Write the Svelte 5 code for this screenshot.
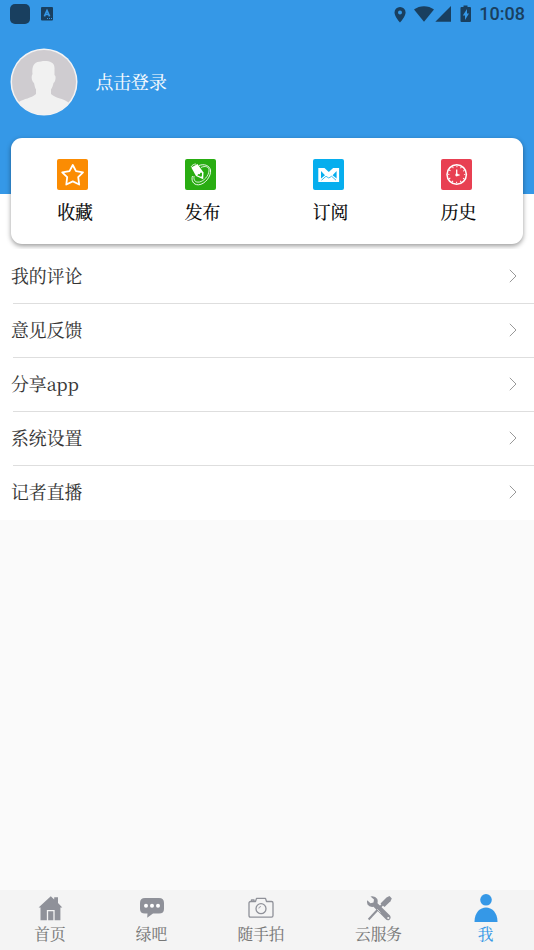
<script>
  const shortcuts = [
    { id: 'fav', label: '收藏', color: '#fb8c03' },
    { id: 'post', label: '发布', color: '#29ad12' },
    { id: 'sub', label: '订阅', color: '#06aeee' },
    { id: 'history', label: '历史', color: '#e84052' }
  ];
  const rows = ['我的评论', '意见反馈', '分享app', '系统设置', '记者直播'];
  const tabs = [
    { id: 'home', label: '首页', grow: 100 },
    { id: 'chat', label: '绿吧', grow: 103 },
    { id: 'camera', label: '随手拍', grow: 116 },
    { id: 'tools', label: '云服务', grow: 119 },
    { id: 'me', label: '我', grow: 95 }
  ];
</script>

<div class="screen">
  <header>
    <div class="status">
      <span class="app-dot"></span>
      <svg class="lang" width="12" height="14" viewBox="0 0 12 14">
        <rect width="12" height="13.400" rx="1" fill="#193f5f" />
        <path d="M3.400 9.300L6 3.500L8.600 9.300M4.200 7.500H7.800" fill="none" stroke="#3598e7" stroke-width="1.700" />
        <path d="M6 11.500h1M8 11.500h1M10 11.500h1" stroke="#3598e7" />
      </svg>
      <svg class="signals" width="82" height="20" viewBox="390 3 82 20" fill="#193f5f">
        <path fill-rule="evenodd" d="M400 6a5.500 5.500 0 0 0-5.500 5.400C394.500 15.500 400 21.500 400 21.500s5.600-6 5.600-10.100A5.500 5.500 0 0 0 400 6Zm0 3.500a2 2 0 1 1 0 4a2 2 0 0 1 0-4Z" />
        <path d="M414 8.500C419.500 4 428.500 4 434 8.500L424 20.800Z" />
        <path d="M451 5V20.800H435.300Z" />
        <path fill-rule="evenodd" d="M463.500 4.500h4V6h2.500q1 0 1 1V20q0 1-1 1h-8.500q-1 0-1-1V7q0-1 1-1h2ZM467 8l-4.200 6.500h2.200v4.500l4-6.500h-2Z" />
      </svg>
      <time>10:08</time>
    </div>
    <div class="profile">
      <svg class="avatar" width="68" height="68" viewBox="0 0 68 68">
        <defs><clipPath id="face"><circle cx="34" cy="34" r="32.500" /></clipPath></defs>
        <circle cx="34" cy="34" r="33.500" fill="#f3f3f4" />
        <circle cx="34" cy="34" r="32" fill="#cfccd0" />
        <path clip-path="url(#face)" fill="#f1f1f1" d="M22.500 26C21.500 17 25 13.500 31 13.500C36 12.500 44.500 13 44.500 20V27C46.500 28 45.500 34 43.500 35C43 38 42 40 41 41.500V46C46 50.500 54 50.500 59 55V68H9V54C14 50.500 21 50.500 26 46V41.500C25 40 24.500 37 24 35C21.500 33 21 28 22.500 26Z" />
      </svg>
      <span class="login">点击登录</span>
    </div>
  </header>

  <section class="card">
    {#each shortcuts as item (item.id)}
      <div class="cell">
        <div class="shortcut">
          <svg width="31" height="31" viewBox="0 0 31 31" fill="none" stroke="#fff">
            <rect width="31" height="31" rx="2" fill={item.color} stroke="none" />
            {#if item.id === 'fav'}
              <path stroke-width="1.800" stroke-linejoin="round" d="M15.800 6L19 12.200L26 13.300L21.200 18.200L22.200 25.500L15.800 22.400L9.300 25.500L10.200 18.200L5.200 13.300L12.500 12.200Z" />
            {:else if item.id === 'post'}
              <path stroke-width=".9" d="M14 6.500C19 4.500 24.500 6.500 25.500 11C26.500 17 20 25.500 13.500 25.800C8 26 6 21 7.500 17" />
              <path stroke-width=".8" d="M16 8.500C20 6.500 24.500 7.500 24 12C23.500 17 19 22 14.500 23C10 23.800 8.500 21 9 17M6 8C7 6 9 5 11 5" />
              <path stroke="none" fill="#fff" d="M6.300 8.500L12.500 5L18.500 13.500L18.200 20.200L11 17Z" />
              <path stroke="none" fill={item.color} d="M12.200 16.300L13.500 15L14.800 15.200L15.400 13.700L17 13.800L16.900 17.300L15.800 17.800Z" />
            {:else if item.id === 'sub'}
              <rect x="5.300" y="9" width="20.800" height="14" fill="#fff" stroke="none" />
              <path fill={item.color} stroke="none" d="M11.500 9H20.100L15.800 12.900ZM8 12L12 16.200L8 19.500ZM23.600 12L19.600 16.200L23.600 19.500Z" />
              <path stroke={item.color} stroke-width=".8" d="M8.500 21.200L13 17.300L15.800 19L18.600 17.300L23 21.200" />
            {:else}
              <circle cx="15.700" cy="15.500" r="9.700" stroke-width="1.500" />
              <path stroke-width="1.300" d="M15.700 10.500V16H18.500" />
              <circle cx="15.700" cy="16" r="1.400" fill="#fff" stroke="none" />
              <circle cx="15.700" cy="15.500" r="8" stroke-width="1.500" stroke-dasharray="1 3.189" stroke-dashoffset=".5" />
            {/if}
          </svg>
          <span>{item.label}</span>
        </div>
      </div>
    {/each}
  </section>

  <ul class="list">
    {#each rows as row}
      <li>
        <span>{row}</span>
        <svg width="8" height="14" viewBox="0 0 8 14"><path d="M.8 .8L7 7L.8 13.200" fill="none" stroke="#999" stroke-width="1" /></svg>
      </li>
    {/each}
  </ul>

  <nav>
    {#each tabs as tab (tab.id)}
      <div class="tab" class:active={tab.id === 'me'} style:flex-grow={tab.grow}>
        <svg width="28" height="30" viewBox="0 0 28 30" fill="currentColor">
          {#if tab.id === 'home'}
            <path d="M14.800 2.200L18.200 5.500V3.200H22V9L26.300 13.500H24.400V26.300H4.500V13.500H2.600Z" />
            <path fill="none" stroke="#f4f4f4" stroke-width="1.300" d="M11.500 27V16.600H18V27" />
          {:else if tab.id === 'chat'}
            <path d="M7 4H21Q26 4 26 9V15Q26 19.600 21 19.600H15L9.200 23.700L9.500 19.600H7Q2 19.600 2 15V9Q2 4 7 4Z" />
            <g fill="#fff"><circle cx="8" cy="11.800" r="2" /><circle cx="14" cy="11.800" r="2" /><circle cx="20" cy="11.800" r="2" /></g>
          {:else if tab.id === 'camera'}
            <path fill="none" stroke="currentColor" stroke-width="1.300" stroke-linejoin="round" d="M3.700 7.500H8.500L9.500 4.400H18.500L19.500 7.500H24.500Q26 7.500 26 9V21.500Q26 23.200 24.500 23.200H3.500Q2 23.200 2 21.500V9Q2 7.500 3.700 7.500ZM4.500 7V5.800H7V7" />
            <circle cx="14" cy="14.700" r="5" fill="none" stroke="currentColor" stroke-width="1.300" />
            <path fill="none" stroke="currentColor" stroke-width=".8" d="M11.800 14.500Q12 12.500 14 12.500" />
          {:else if tab.id === 'tools'}
            <path d="M5.500 2.500Q10 1.500 12.300 5Q13.200 7.500 12.500 9.300L25 21.500Q26.500 24 24.500 25.700Q22.500 27 20.500 25L8.500 12.800Q4.500 13.500 2.500 10.500Q1.500 8.500 2.200 6.200L5.500 9.200L8.500 8.500L9 5.500Z" />
            <path d="M24.500 2L26.800 4.500L25.500 7.200L19.500 13L15.500 9.500L21.500 3.500Z" />
            <path d="M17.500 10.500L3.600 25.500" stroke="currentColor" stroke-width="2" />
            <path d="M12.200 15.200L15.500 18.500" stroke="#f4f4f4" stroke-width=".7" />
            <circle cx="23.300" cy="24" r="1.100" fill="#f4f4f4" />
          {:else}
            <circle cx="14" cy="5.800" r="5.800" />
            <path d="M2.500 28C2.500 8.800 25.500 8.800 25.500 28Z" />
          {/if}
        </svg>
        <span>{tab.label}</span>
      </div>
    {/each}
  </nav>
</div>

<style>
  .screen {
    display: flex;
    flex-direction: column;
    height: 950px;
    background: #fafafa;
    font-family: "Noto Serif CJK SC", "Source Han Serif SC", "Noto Sans CJK SC", serif;
    color: #333;
  }
  header {
    flex: none;
    height: 193.500px;
    background: #3598e7;
  }
  .status {
    display: flex;
    align-items: center;
    height: 27px;
    padding: 0 9px 0 10px;
  }
  .app-dot {
    width: 20px;
    height: 20px;
    border-radius: 5px;
    background: #193f5f;
  }
  .lang { margin-left: 11px; }
  .signals { margin-left: auto; }
  time {
    margin-left: 7px;
    font: 500 18px/27px Roboto, sans-serif;
    color: #193f5f;
  }
  .profile {
    display: flex;
    align-items: center;
    gap: 17px;
    padding: 21.400px 10.400px 0;
  }
  .login {
    padding-bottom: 2px;
    font-size: 17.850px;
    line-height: 26px;
    color: #fff;
    -webkit-text-stroke: .1px;
  }
  .card {
    flex: none;
    display: flex;
    height: 106px;
    margin: -55.500px 11px 0;
    border-radius: 11px;
    background: #fff;
    box-shadow: 0 2px 5px rgba(0, 0, 0, .4);
    z-index: 1;
    clip-path: inset(-8px -11px -5px -11px);
  }
  .cell {
    flex: 1;
    display: flex;
    justify-content: center;
  }
  .cell:nth-child(n + 2) .shortcut { margin-right: 1px; }
  .shortcut {
    display: flex;
    flex-direction: column;
    align-items: flex-start;
    gap: 8px;
    padding-top: 21px;
    font-size: 17.850px;
    line-height: 26px;
    color: #000;
    -webkit-text-stroke: .2px;
  }
  .list {
    flex: none;
    margin: -50.500px 0 0;
    padding: 56.500px 0 0;
    list-style: none;
    background: #fff;
  }
  li {
    display: flex;
    align-items: center;
    justify-content: space-between;
    box-sizing: border-box;
    height: 54px;
    padding: 0 17px 2px 11px;
    font-size: 17.850px;
    line-height: 26px;
    background: linear-gradient(#dedede, #dedede) 13px 100% / 100% 1px no-repeat;
    -webkit-text-stroke: .1px;
  }
  li span { padding-bottom: 2px; }
  li:last-child { background: none; }
  nav {
    flex: none;
    display: flex;
    box-sizing: border-box;
    height: 60px;
    margin-top: auto;
    padding-right: 1px;
    background: #f4f4f4;
    color: #8f9199;
  }
  .tab {
    flex: 1 1 0;
    display: flex;
    flex-direction: column;
    align-items: center;
    padding-top: 4px;
  }
  .tab span {
    margin-top: -2px;
    font-size: 15.700px;
    line-height: 22px;
    color: #777;
    -webkit-text-stroke: .1px;
  }
  .tab.active, .tab.active span { color: #3598e7; }
</style>
